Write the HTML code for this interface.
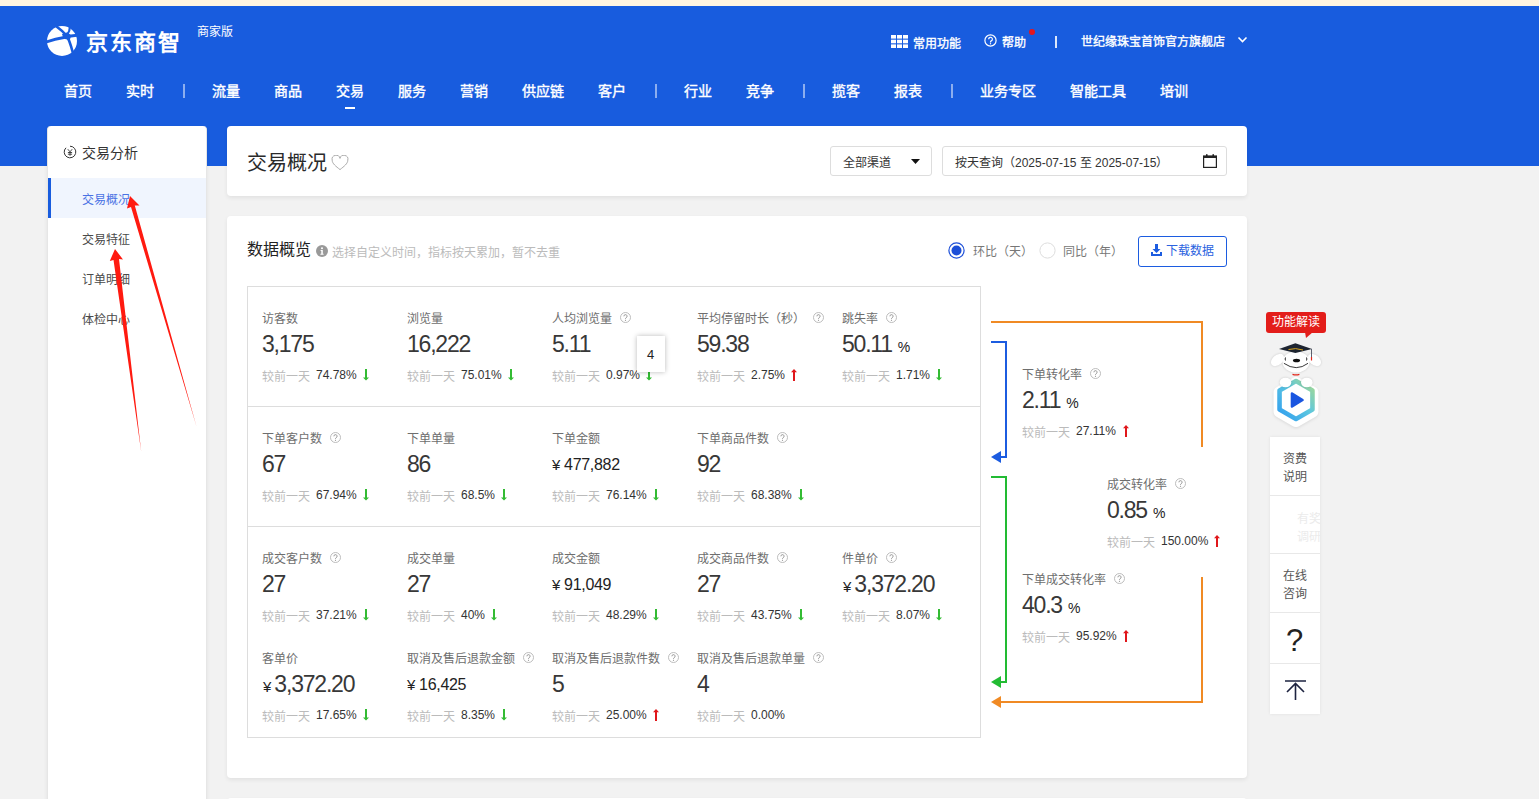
<!DOCTYPE html><html lang="zh-CN"><head><meta charset="utf-8"><style>
*{margin:0;padding:0;box-sizing:border-box}
html,body{width:1539px;height:799px;overflow:hidden}
body{position:relative;background:#f2f2f2;font-family:"Liberation Sans",sans-serif;color:#333}
.a{position:absolute;white-space:nowrap;line-height:1}
.nav{font-size:14px;color:#fff;font-weight:normal;-webkit-text-stroke:0.4px #fff;top:84px}
.sep{width:1.5px;height:14px;background:rgba(255,255,255,.5);top:84px}
.card{background:#fff;border-radius:4px;box-shadow:0 2px 4px rgba(0,0,0,.07)}
.side{font-size:12px;color:#4a4a4a}
.lbl{font-size:12px;color:#6e6e6e}
.val{font-size:23px;color:#383838;letter-spacing:-1.2px}
.sval{font-size:16px;color:#222;letter-spacing:-0.3px}
.yen{font-size:15px;color:#222}
.pu{font-size:14px;color:#222}
.cmp{font-size:12px;color:#bbb}
.pct{font-size:12px;color:#333}
</style></head><body>
<div class="a" style="left:0;top:0;width:1539px;height:6px;background:#fff5e1"></div>
<div class="a" style="left:0;top:6px;width:1539px;height:160px;background:#185cde"></div>

<!-- logo -->
<svg class="a" style="left:47px;top:26px" width="30" height="30" viewBox="0 0 30 30">
  <circle cx="15" cy="15" r="15" fill="#fff"/>
  <g fill="none" stroke="#185cde" stroke-linecap="round">
   <path d="M9.5 0.5Q15 4.5 19.5 9.5Q22.5 14 25.5 25.5" stroke-width="2.6"/>
   <path d="M-0.5 16Q8 12.8 17 11.5Q25 9.5 30.5 9.2" stroke-width="2.8"/>
   <path d="M22.8 1.5Q22.8 5 20.5 8" stroke-width="2.2"/>
  </g>
  <path d="M15 8L19.5 6.5L23.5 8.5L23.5 11.5L22.5 15.5Q20 12.5 16.5 12.8Z" fill="#185cde"/>
</svg>
<div class="a" style="left:86px;top:32px;font-size:22px;color:#fff;font-weight:bold;letter-spacing:2px">京东商智</div>
<div class="a" style="left:197px;top:26px;font-size:12px;color:#fff;font-weight:500">商家版</div>

<!-- nav -->
<div class="a nav" style="left:64px">首页</div>
<div class="a nav" style="left:126px">实时</div>
<div class="a sep" style="left:183px"></div>
<div class="a nav" style="left:212px">流量</div>
<div class="a nav" style="left:274px">商品</div>
<div class="a nav" style="left:336px">交易</div>
<div class="a" style="left:345px;top:107px;width:10px;height:2px;background:#fff"></div>
<div class="a nav" style="left:398px">服务</div>
<div class="a nav" style="left:460px">营销</div>
<div class="a nav" style="left:522px">供应链</div>
<div class="a nav" style="left:598px">客户</div>
<div class="a sep" style="left:655px"></div>
<div class="a nav" style="left:684px">行业</div>
<div class="a nav" style="left:746px">竞争</div>
<div class="a sep" style="left:803px"></div>
<div class="a nav" style="left:832px">揽客</div>
<div class="a nav" style="left:894px">报表</div>
<div class="a sep" style="left:951px"></div>
<div class="a nav" style="left:980px">业务专区</div>
<div class="a nav" style="left:1070px">智能工具</div>
<div class="a nav" style="left:1160px">培训</div>

<!-- top right -->
<svg class="a" style="left:891px;top:35px" width="17" height="13" viewBox="0 0 17 13"><g fill="#fff">
<rect x="0" y="0" width="5" height="3.6"/><rect x="6" y="0" width="5" height="3.6"/><rect x="12" y="0" width="5" height="3.6"/>
<rect x="0" y="4.7" width="5" height="3.6"/><rect x="6" y="4.7" width="5" height="3.6"/><rect x="12" y="4.7" width="5" height="3.6"/>
<rect x="0" y="9.4" width="5" height="3.6"/><rect x="6" y="9.4" width="5" height="3.6"/><rect x="12" y="9.4" width="5" height="3.6"/>
</g></svg>
<div class="a" style="left:913px;top:37.5px;font-size:12px;color:#fff;-webkit-text-stroke:0.35px #fff">常用功能</div>
<svg class="a" style="left:984px;top:34px" width="13" height="13" viewBox="0 0 13 13"><circle cx="6.5" cy="6.5" r="5.6" fill="none" stroke="#fff" stroke-width="1.2"/><path d="M4.6 5.2a1.9 1.9 0 1 1 2.7 1.7c-.6.3-.8.6-.8 1.2v.4" fill="none" stroke="#fff" stroke-width="1.2"/><circle cx="6.5" cy="9.7" r=".7" fill="#fff"/></svg>
<div class="a" style="left:1002px;top:36.5px;font-size:12px;color:#fff;-webkit-text-stroke:0.35px #fff">帮助</div>
<div class="a" style="left:1029px;top:29px;width:6px;height:6px;border-radius:50%;background:#e4161e"></div>
<div class="a" style="left:1055px;top:36px;width:1.5px;height:12px;background:rgba(255,255,255,.85)"></div>
<div class="a" style="left:1081px;top:36px;font-size:12px;color:#fff;-webkit-text-stroke:0.35px #fff">世纪缘珠宝首饰官方旗舰店</div>
<svg class="a" style="left:1237px;top:36px" width="11" height="8" viewBox="0 0 11 8"><path d="M1.5 1.5L5.5 5.5L9.5 1.5" fill="none" stroke="#fff" stroke-width="1.6"/></svg>

<!-- sidebar -->
<div class="a card" style="left:47px;top:126px;width:160px;height:700px;border-radius:4px 4px 0 0;border:1px solid #e6e6e6;border-top:0"></div>
<svg class="a" style="left:63px;top:145px" width="14" height="14" viewBox="0 0 14 14"><path d="M7 1.2A5.8 5.8 0 1 1 3 2.8" fill="none" stroke="#333" stroke-width="1"/><path d="M4.8 4.2L7 6.8L9.2 4.2M7 6.8V10.8M4.9 7.5H9.1M4.9 9.2H9.1" fill="none" stroke="#333" stroke-width=".9"/></svg>
<div class="a" style="left:82px;top:146px;font-size:14px;color:#333">交易分析</div>
<div class="a" style="left:48px;top:178px;width:158px;height:40px;background:#f0f5fe"></div>
<div class="a" style="left:48px;top:178px;width:3px;height:40px;background:#185cde"></div>
<div class="a side" style="left:82px;top:194px;color:#4a72e4">交易概况</div>
<div class="a side" style="left:82px;top:234px">交易特征</div>
<div class="a side" style="left:82px;top:274px">订单明细</div>
<div class="a side" style="left:82px;top:314px">体检中心</div>

<!-- title card -->
<div class="a card" style="left:227px;top:126px;width:1020px;height:70px"></div>
<div class="a" style="left:247px;top:153px;font-size:20px;color:#2a2a2a">交易概况</div>
<svg class="a" style="left:331px;top:155px" width="18" height="16" viewBox="0 0 18 16"><path d="M9 14.6C5 11.4 1.2 8.6 1.2 5.2A3.8 3.8 0 0 1 9 3.4A3.8 3.8 0 0 1 16.8 5.2C16.8 8.6 13 11.4 9 14.6Z" fill="none" stroke="#aaa" stroke-width="1"/></svg>
<div class="a" style="left:830px;top:146px;width:102px;height:30px;border:1px solid #ddd;border-radius:3px;background:#fff"></div>
<div class="a" style="left:843px;top:157px;font-size:12px;color:#333">全部渠道</div>
<svg class="a" style="left:911px;top:159px" width="9" height="5" viewBox="0 0 9 5"><path d="M0 0H9L4.5 5Z" fill="#111"/></svg>
<div class="a" style="left:942px;top:146px;width:285px;height:30px;border:1px solid #ddd;border-radius:3px;background:#fff"></div>
<div class="a" style="left:955px;top:157px;font-size:12px;color:#333">按天查询（2025-07-15 至 2025-07-15）</div>
<svg class="a" style="left:1203px;top:153px" width="14" height="15" viewBox="0 0 14 15"><rect x="0.6" y="3" width="12.8" height="11.4" fill="none" stroke="#222" stroke-width="1.2"/><rect x="0.6" y="3" width="12.8" height="2" fill="#222"/><rect x="3" y="1" width="1.6" height="3.2" rx=".8" fill="#222"/><rect x="9.4" y="1" width="1.6" height="3.2" rx=".8" fill="#222"/></svg>

<!-- data card -->
<div class="a card" style="left:227px;top:216px;width:1020px;height:562px"></div>
<div class="a" style="left:247px;top:242px;font-size:16px;color:#222">数据概览</div>
<svg class="a" style="left:316px;top:245px" width="12" height="12" viewBox="0 0 12 12"><circle cx="6" cy="6" r="6" fill="#999"/><circle cx="6" cy="3.2" r="1" fill="#fff"/><path d="M4.6 5H6.8V8.8H7.6V9.8H4.4V8.8H5.3V6H4.6Z" fill="#fff"/></svg>
<div class="a" style="left:332px;top:247px;font-size:12px;color:#bbb">选择自定义时间，指标按天累加，暂不去重</div>

<div class="a" style="left:247px;top:286px;width:734px;height:452px;border:1px solid #ddd"></div>
<div class="a" style="left:248px;top:406px;width:732px;height:1px;background:#ddd"></div>
<div class="a" style="left:248px;top:526px;width:732px;height:1px;background:#ddd"></div>

<!-- next card -->
<div class="a card" style="left:227px;top:798px;width:1020px;height:100px"></div>

<div class="a lbl" style="left:262px;top:313px">访客数</div>
<div class="a val" style="left:262px;top:333px">3,175</div>
<div class="a cmp" style="left:262px;top:371px">较前一天</div>
<div class="a pct" style="left:316px;top:369px">74.78%</div>
<svg class="a" style="left:363px;top:369px" width="6" height="12" viewBox="0 0 6 12"><path d="M2 0H4V8.5H6L3 11.6L0 8.5H2Z" fill="#33bb33"/></svg>
<div class="a lbl" style="left:407px;top:313px">浏览量</div>
<div class="a val" style="left:407px;top:333px">16,222</div>
<div class="a cmp" style="left:407px;top:371px">较前一天</div>
<div class="a pct" style="left:461px;top:369px">75.01%</div>
<svg class="a" style="left:508px;top:369px" width="6" height="12" viewBox="0 0 6 12"><path d="M2 0H4V8.5H6L3 11.6L0 8.5H2Z" fill="#33bb33"/></svg>
<div class="a lbl" style="left:552px;top:313px">人均浏览量</div>
<svg class="a" style="left:620px;top:312px" width="11" height="11" viewBox="0 0 11 11"><circle cx="5.5" cy="5.5" r="5" fill="none" stroke="#b5b5b5" stroke-width="0.9"/><path d="M3.9 4.3a1.6 1.6 0 1 1 2.3 1.4c-.5.3-.7.5-.7 1v.4" fill="none" stroke="#999" stroke-width="1"/><circle cx="5.5" cy="8.3" r="0.6" fill="#999"/></svg>
<div class="a val" style="left:552px;top:333px">5.11</div>
<div class="a cmp" style="left:552px;top:371px">较前一天</div>
<div class="a pct" style="left:606px;top:369px">0.97%</div>
<svg class="a" style="left:646px;top:369px" width="6" height="12" viewBox="0 0 6 12"><path d="M2 0H4V8.5H6L3 11.6L0 8.5H2Z" fill="#33bb33"/></svg>
<div class="a lbl" style="left:697px;top:313px">平均停留时长（秒）</div>
<svg class="a" style="left:813px;top:312px" width="11" height="11" viewBox="0 0 11 11"><circle cx="5.5" cy="5.5" r="5" fill="none" stroke="#b5b5b5" stroke-width="0.9"/><path d="M3.9 4.3a1.6 1.6 0 1 1 2.3 1.4c-.5.3-.7.5-.7 1v.4" fill="none" stroke="#999" stroke-width="1"/><circle cx="5.5" cy="8.3" r="0.6" fill="#999"/></svg>
<div class="a val" style="left:697px;top:333px">59.38</div>
<div class="a cmp" style="left:697px;top:371px">较前一天</div>
<div class="a pct" style="left:751px;top:369px">2.75%</div>
<svg class="a" style="left:791px;top:369px" width="6" height="12" viewBox="0 0 6 12"><path d="M3 0L0 3.2H2V12H4V3.2H6Z" fill="#e0171b"/></svg>
<div class="a lbl" style="left:842px;top:313px">跳失率</div>
<svg class="a" style="left:886px;top:312px" width="11" height="11" viewBox="0 0 11 11"><circle cx="5.5" cy="5.5" r="5" fill="none" stroke="#b5b5b5" stroke-width="0.9"/><path d="M3.9 4.3a1.6 1.6 0 1 1 2.3 1.4c-.5.3-.7.5-.7 1v.4" fill="none" stroke="#999" stroke-width="1"/><circle cx="5.5" cy="8.3" r="0.6" fill="#999"/></svg>
<div class="a val" style="left:842px;top:333px">50.11<span class="pu" style="margin-left:6px;letter-spacing:0">%</span></div>
<div class="a cmp" style="left:842px;top:371px">较前一天</div>
<div class="a pct" style="left:896px;top:369px">1.71%</div>
<svg class="a" style="left:936px;top:369px" width="6" height="12" viewBox="0 0 6 12"><path d="M2 0H4V8.5H6L3 11.6L0 8.5H2Z" fill="#33bb33"/></svg>
<div class="a lbl" style="left:262px;top:433px">下单客户数</div>
<svg class="a" style="left:330px;top:432px" width="11" height="11" viewBox="0 0 11 11"><circle cx="5.5" cy="5.5" r="5" fill="none" stroke="#b5b5b5" stroke-width="0.9"/><path d="M3.9 4.3a1.6 1.6 0 1 1 2.3 1.4c-.5.3-.7.5-.7 1v.4" fill="none" stroke="#999" stroke-width="1"/><circle cx="5.5" cy="8.3" r="0.6" fill="#999"/></svg>
<div class="a val" style="left:262px;top:453px">67</div>
<div class="a cmp" style="left:262px;top:491px">较前一天</div>
<div class="a pct" style="left:316px;top:489px">67.94%</div>
<svg class="a" style="left:363px;top:489px" width="6" height="12" viewBox="0 0 6 12"><path d="M2 0H4V8.5H6L3 11.6L0 8.5H2Z" fill="#33bb33"/></svg>
<div class="a lbl" style="left:407px;top:433px">下单单量</div>
<div class="a val" style="left:407px;top:453px">86</div>
<div class="a cmp" style="left:407px;top:491px">较前一天</div>
<div class="a pct" style="left:461px;top:489px">68.5%</div>
<svg class="a" style="left:501px;top:489px" width="6" height="12" viewBox="0 0 6 12"><path d="M2 0H4V8.5H6L3 11.6L0 8.5H2Z" fill="#33bb33"/></svg>
<div class="a lbl" style="left:552px;top:433px">下单金额</div>
<div class="a sval" style="left:552px;top:457px"><span class="yen" style="margin-right:4px">¥</span>477,882</div>
<div class="a cmp" style="left:552px;top:491px">较前一天</div>
<div class="a pct" style="left:606px;top:489px">76.14%</div>
<svg class="a" style="left:653px;top:489px" width="6" height="12" viewBox="0 0 6 12"><path d="M2 0H4V8.5H6L3 11.6L0 8.5H2Z" fill="#33bb33"/></svg>
<div class="a lbl" style="left:697px;top:433px">下单商品件数</div>
<svg class="a" style="left:777px;top:432px" width="11" height="11" viewBox="0 0 11 11"><circle cx="5.5" cy="5.5" r="5" fill="none" stroke="#b5b5b5" stroke-width="0.9"/><path d="M3.9 4.3a1.6 1.6 0 1 1 2.3 1.4c-.5.3-.7.5-.7 1v.4" fill="none" stroke="#999" stroke-width="1"/><circle cx="5.5" cy="8.3" r="0.6" fill="#999"/></svg>
<div class="a val" style="left:697px;top:453px">92</div>
<div class="a cmp" style="left:697px;top:491px">较前一天</div>
<div class="a pct" style="left:751px;top:489px">68.38%</div>
<svg class="a" style="left:798px;top:489px" width="6" height="12" viewBox="0 0 6 12"><path d="M2 0H4V8.5H6L3 11.6L0 8.5H2Z" fill="#33bb33"/></svg>
<div class="a lbl" style="left:262px;top:553px">成交客户数</div>
<svg class="a" style="left:330px;top:552px" width="11" height="11" viewBox="0 0 11 11"><circle cx="5.5" cy="5.5" r="5" fill="none" stroke="#b5b5b5" stroke-width="0.9"/><path d="M3.9 4.3a1.6 1.6 0 1 1 2.3 1.4c-.5.3-.7.5-.7 1v.4" fill="none" stroke="#999" stroke-width="1"/><circle cx="5.5" cy="8.3" r="0.6" fill="#999"/></svg>
<div class="a val" style="left:262px;top:573px">27</div>
<div class="a cmp" style="left:262px;top:611px">较前一天</div>
<div class="a pct" style="left:316px;top:609px">37.21%</div>
<svg class="a" style="left:363px;top:609px" width="6" height="12" viewBox="0 0 6 12"><path d="M2 0H4V8.5H6L3 11.6L0 8.5H2Z" fill="#33bb33"/></svg>
<div class="a lbl" style="left:407px;top:553px">成交单量</div>
<div class="a val" style="left:407px;top:573px">27</div>
<div class="a cmp" style="left:407px;top:611px">较前一天</div>
<div class="a pct" style="left:461px;top:609px">40%</div>
<svg class="a" style="left:491px;top:609px" width="6" height="12" viewBox="0 0 6 12"><path d="M2 0H4V8.5H6L3 11.6L0 8.5H2Z" fill="#33bb33"/></svg>
<div class="a lbl" style="left:552px;top:553px">成交金额</div>
<div class="a sval" style="left:552px;top:577px"><span class="yen" style="margin-right:4px">¥</span>91,049</div>
<div class="a cmp" style="left:552px;top:611px">较前一天</div>
<div class="a pct" style="left:606px;top:609px">48.29%</div>
<svg class="a" style="left:653px;top:609px" width="6" height="12" viewBox="0 0 6 12"><path d="M2 0H4V8.5H6L3 11.6L0 8.5H2Z" fill="#33bb33"/></svg>
<div class="a lbl" style="left:697px;top:553px">成交商品件数</div>
<svg class="a" style="left:777px;top:552px" width="11" height="11" viewBox="0 0 11 11"><circle cx="5.5" cy="5.5" r="5" fill="none" stroke="#b5b5b5" stroke-width="0.9"/><path d="M3.9 4.3a1.6 1.6 0 1 1 2.3 1.4c-.5.3-.7.5-.7 1v.4" fill="none" stroke="#999" stroke-width="1"/><circle cx="5.5" cy="8.3" r="0.6" fill="#999"/></svg>
<div class="a val" style="left:697px;top:573px">27</div>
<div class="a cmp" style="left:697px;top:611px">较前一天</div>
<div class="a pct" style="left:751px;top:609px">43.75%</div>
<svg class="a" style="left:798px;top:609px" width="6" height="12" viewBox="0 0 6 12"><path d="M2 0H4V8.5H6L3 11.6L0 8.5H2Z" fill="#33bb33"/></svg>
<div class="a lbl" style="left:842px;top:553px">件单价</div>
<svg class="a" style="left:886px;top:552px" width="11" height="11" viewBox="0 0 11 11"><circle cx="5.5" cy="5.5" r="5" fill="none" stroke="#b5b5b5" stroke-width="0.9"/><path d="M3.9 4.3a1.6 1.6 0 1 1 2.3 1.4c-.5.3-.7.5-.7 1v.4" fill="none" stroke="#999" stroke-width="1"/><circle cx="5.5" cy="8.3" r="0.6" fill="#999"/></svg>
<div class="a val" style="left:843px;top:573px"><span class="yen" style="letter-spacing:0;margin-right:3px">¥</span>3,372.20</div>
<div class="a cmp" style="left:842px;top:611px">较前一天</div>
<div class="a pct" style="left:896px;top:609px">8.07%</div>
<svg class="a" style="left:936px;top:609px" width="6" height="12" viewBox="0 0 6 12"><path d="M2 0H4V8.5H6L3 11.6L0 8.5H2Z" fill="#33bb33"/></svg>
<div class="a lbl" style="left:262px;top:653px">客单价</div>
<div class="a val" style="left:263px;top:673px"><span class="yen" style="letter-spacing:0;margin-right:3px">¥</span>3,372.20</div>
<div class="a cmp" style="left:262px;top:711px">较前一天</div>
<div class="a pct" style="left:316px;top:709px">17.65%</div>
<svg class="a" style="left:363px;top:709px" width="6" height="12" viewBox="0 0 6 12"><path d="M2 0H4V8.5H6L3 11.6L0 8.5H2Z" fill="#33bb33"/></svg>
<div class="a lbl" style="left:407px;top:653px">取消及售后退款金额</div>
<svg class="a" style="left:523px;top:652px" width="11" height="11" viewBox="0 0 11 11"><circle cx="5.5" cy="5.5" r="5" fill="none" stroke="#b5b5b5" stroke-width="0.9"/><path d="M3.9 4.3a1.6 1.6 0 1 1 2.3 1.4c-.5.3-.7.5-.7 1v.4" fill="none" stroke="#999" stroke-width="1"/><circle cx="5.5" cy="8.3" r="0.6" fill="#999"/></svg>
<div class="a sval" style="left:407px;top:677px"><span class="yen" style="margin-right:4px">¥</span>16,425</div>
<div class="a cmp" style="left:407px;top:711px">较前一天</div>
<div class="a pct" style="left:461px;top:709px">8.35%</div>
<svg class="a" style="left:501px;top:709px" width="6" height="12" viewBox="0 0 6 12"><path d="M2 0H4V8.5H6L3 11.6L0 8.5H2Z" fill="#33bb33"/></svg>
<div class="a lbl" style="left:552px;top:653px">取消及售后退款件数</div>
<svg class="a" style="left:668px;top:652px" width="11" height="11" viewBox="0 0 11 11"><circle cx="5.5" cy="5.5" r="5" fill="none" stroke="#b5b5b5" stroke-width="0.9"/><path d="M3.9 4.3a1.6 1.6 0 1 1 2.3 1.4c-.5.3-.7.5-.7 1v.4" fill="none" stroke="#999" stroke-width="1"/><circle cx="5.5" cy="8.3" r="0.6" fill="#999"/></svg>
<div class="a val" style="left:552px;top:673px">5</div>
<div class="a cmp" style="left:552px;top:711px">较前一天</div>
<div class="a pct" style="left:606px;top:709px">25.00%</div>
<svg class="a" style="left:653px;top:709px" width="6" height="12" viewBox="0 0 6 12"><path d="M3 0L0 3.2H2V12H4V3.2H6Z" fill="#e0171b"/></svg>
<div class="a lbl" style="left:697px;top:653px">取消及售后退款单量</div>
<svg class="a" style="left:813px;top:652px" width="11" height="11" viewBox="0 0 11 11"><circle cx="5.5" cy="5.5" r="5" fill="none" stroke="#b5b5b5" stroke-width="0.9"/><path d="M3.9 4.3a1.6 1.6 0 1 1 2.3 1.4c-.5.3-.7.5-.7 1v.4" fill="none" stroke="#999" stroke-width="1"/><circle cx="5.5" cy="8.3" r="0.6" fill="#999"/></svg>
<div class="a val" style="left:697px;top:673px">4</div>
<div class="a cmp" style="left:697px;top:711px">较前一天</div>
<div class="a pct" style="left:751px;top:709px">0.00%</div>
<div class="a lbl" style="left:1022px;top:369px">下单转化率</div>
<svg class="a" style="left:1090px;top:368px" width="11" height="11" viewBox="0 0 11 11"><circle cx="5.5" cy="5.5" r="5" fill="none" stroke="#b5b5b5" stroke-width="0.9"/><path d="M3.9 4.3a1.6 1.6 0 1 1 2.3 1.4c-.5.3-.7.5-.7 1v.4" fill="none" stroke="#999" stroke-width="1"/><circle cx="5.5" cy="8.3" r="0.6" fill="#999"/></svg>
<div class="a val" style="left:1022px;top:389px">2.11<span class="pu" style="margin-left:6px;letter-spacing:0">%</span></div>
<div class="a cmp" style="left:1022px;top:427px">较前一天</div>
<div class="a pct" style="left:1076px;top:425px">27.11%</div>
<svg class="a" style="left:1123px;top:425px" width="6" height="12" viewBox="0 0 6 12"><path d="M3 0L0 3.2H2V12H4V3.2H6Z" fill="#e0171b"/></svg>
<div class="a lbl" style="left:1107px;top:479px">成交转化率</div>
<svg class="a" style="left:1175px;top:478px" width="11" height="11" viewBox="0 0 11 11"><circle cx="5.5" cy="5.5" r="5" fill="none" stroke="#b5b5b5" stroke-width="0.9"/><path d="M3.9 4.3a1.6 1.6 0 1 1 2.3 1.4c-.5.3-.7.5-.7 1v.4" fill="none" stroke="#999" stroke-width="1"/><circle cx="5.5" cy="8.3" r="0.6" fill="#999"/></svg>
<div class="a val" style="left:1107px;top:499px">0.85<span class="pu" style="margin-left:6px;letter-spacing:0">%</span></div>
<div class="a cmp" style="left:1107px;top:537px">较前一天</div>
<div class="a pct" style="left:1161px;top:535px">150.00%</div>
<svg class="a" style="left:1214px;top:535px" width="6" height="12" viewBox="0 0 6 12"><path d="M3 0L0 3.2H2V12H4V3.2H6Z" fill="#e0171b"/></svg>
<div class="a lbl" style="left:1022px;top:574px">下单成交转化率</div>
<svg class="a" style="left:1114px;top:573px" width="11" height="11" viewBox="0 0 11 11"><circle cx="5.5" cy="5.5" r="5" fill="none" stroke="#b5b5b5" stroke-width="0.9"/><path d="M3.9 4.3a1.6 1.6 0 1 1 2.3 1.4c-.5.3-.7.5-.7 1v.4" fill="none" stroke="#999" stroke-width="1"/><circle cx="5.5" cy="8.3" r="0.6" fill="#999"/></svg>
<div class="a val" style="left:1022px;top:594px">40.3<span class="pu" style="margin-left:6px;letter-spacing:0">%</span></div>
<div class="a cmp" style="left:1022px;top:632px">较前一天</div>
<div class="a pct" style="left:1076px;top:630px">95.92%</div>
<svg class="a" style="left:1123px;top:630px" width="6" height="12" viewBox="0 0 6 12"><path d="M3 0L0 3.2H2V12H4V3.2H6Z" fill="#e0171b"/></svg>
<!-- flow lines -->
<svg class="a" style="left:985px;top:315px" width="225" height="400" viewBox="985 315 225 400">
 <g fill="none" stroke-width="2">
  <path d="M991 322H1202V447" stroke="#f08a24"/>
  <path d="M1202 577V702H1000" stroke="#f08a24"/>
  <path d="M991 342H1006V457H1000" stroke="#1c5ce0"/>
  <path d="M991 477H1006V682H1000" stroke="#22bb33"/>
 </g>
 <path d="M991 457L1001 451V463Z" fill="#1c5ce0"/>
 <path d="M991 682L1001 676V688Z" fill="#22bb33"/>
 <path d="M991 702L1001 696V708Z" fill="#f08a24"/>
</svg>
<!-- radios & download -->
<svg class="a" style="left:948px;top:242px" width="17" height="17" viewBox="0 0 17 17"><circle cx="8.5" cy="8.5" r="7.6" fill="#fff" stroke="#1c4fd8" stroke-width="1.2"/><circle cx="8.5" cy="8.5" r="5" fill="#1c4fd8"/></svg>
<div class="a" style="left:973px;top:246px;font-size:12px;color:#777">环比（天）</div>
<svg class="a" style="left:1039px;top:242px" width="17" height="17" viewBox="0 0 17 17"><circle cx="8.5" cy="8.5" r="7.6" fill="#fff" stroke="#ddd" stroke-width="1"/></svg>
<div class="a" style="left:1063px;top:246px;font-size:12px;color:#777">同比（年）</div>
<div class="a" style="left:1138px;top:236px;width:89px;height:31px;border:1px solid #1c5ce0;border-radius:3px;background:#fff"></div>
<svg class="a" style="left:1151px;top:244px" width="11" height="12" viewBox="0 0 11 12"><path d="M4 0H7V5H9.5L5.5 9L1.5 5H4Z" fill="#1c5ce0"/><path d="M0 8H2V10H9V8H11V12H0Z" fill="#1c5ce0"/></svg>
<div class="a" style="left:1166px;top:245px;font-size:12px;color:#2a62e0">下载数据</div>

<!-- tooltip 4 -->
<div class="a" style="left:637px;top:336px;width:28px;height:36px;background:#fff;box-shadow:0 0 5px rgba(0,0,0,.28)"></div>
<div class="a" style="left:647px;top:348px;font-size:13px;color:#222">4</div>

<!-- right float panel -->
<div class="a" style="left:1266px;top:312px;width:60px;height:21px;background:#e31d1a;border-radius:3px"></div>
<svg class="a" style="left:1305px;top:332px" width="8" height="6" viewBox="0 0 8 6"><path d="M0 0H8L1 6Z" fill="#e31d1a"/></svg>
<div class="a" style="left:1272px;top:316px;font-size:12px;color:#fff">功能解读</div>
<svg class="a" style="left:1268px;top:340px" width="56" height="90" viewBox="0 0 56 90">
 <defs><linearGradient id="hg" x1="1" y1="0" x2="0" y2="1"><stop offset="0" stop-color="#a6d98f"/><stop offset=".45" stop-color="#5cc7e0"/><stop offset="1" stop-color="#2f9cf0"/></linearGradient>
 <filter id="sh" x="-20%" y="-20%" width="140%" height="140%"><feGaussianBlur stdDeviation="0.8"/></filter></defs>
 <path d="M28 43L44.45 52.5V71.5L28 81L11.55 71.5V52.5Z" fill="#fff" stroke="#fff" stroke-width="12" stroke-linejoin="round" style="filter:drop-shadow(0 1px 1.5px rgba(0,0,0,.10))"/>
 <path d="M28 41L44.45 50.5V69.5L28 79L11.55 69.5V50.5Z" fill="#fff" stroke="url(#hg)" stroke-width="4.6" stroke-linejoin="round"/>
 <path d="M24 53.5L34.5 60L24 66.5Z" fill="#1a56e0" stroke="#1a56e0" stroke-width="2.6" stroke-linejoin="round"/>
 <g style="filter:drop-shadow(0 0.5px 1px rgba(0,0,0,.18))">
 <ellipse cx="9.5" cy="20" rx="5" ry="7.5" fill="#fff" transform="rotate(50 9.5 20)"/>
 <ellipse cx="46.5" cy="20" rx="5" ry="7.5" fill="#fff" transform="rotate(-50 46.5 20)"/>
 <ellipse cx="28" cy="22" rx="13.5" ry="10.5" fill="#fff"/>
 </g>
 <path d="M11 8.9L27.4 3.2L44 8.9L27.4 13Z" fill="#1d2430"/>
 <path d="M20.5 9.5Q27.5 7.5 35 10" fill="none" stroke="#d9a520" stroke-width="1"/>
 <path d="M43.5 8.9V20" stroke="#4a5060" stroke-width="0.9"/>
 <path d="M43.5 17V20.5" stroke="#e3261a" stroke-width="1.2"/>
 <ellipse cx="28.5" cy="20.5" rx="3.6" ry="1.8" fill="#111"/>
 <path d="M17.5 17.5Q16.8 19 17.5 20.5M38.5 17.5Q39.2 19 38.5 20.5" fill="none" stroke="#111" stroke-width="0.9"/>
 <path d="M15.9 23.3Q28.5 32 40 23.3" fill="none" stroke="#222" stroke-width="0.9"/>
 <path d="M24.5 34.3Q28 35.5 31.4 34.3" fill="none" stroke="#e3261a" stroke-width="1.3"/>
 <g style="filter:drop-shadow(0 0.5px 1px rgba(0,0,0,.18))">
 <ellipse cx="17.5" cy="42.5" rx="5.8" ry="4.8" fill="#fff"/>
 <ellipse cx="38.8" cy="42.5" rx="5.8" ry="4.8" fill="#fff"/>
 </g>
</svg>

<div class="a" style="left:1270px;top:437px;width:50px;height:277px;background:#fff;box-shadow:0 0 3px rgba(0,0,0,.08)"></div>
<div class="a" style="left:1270px;top:495px;width:50px;height:1px;background:#e8e8e8"></div>
<div class="a" style="left:1270px;top:553px;width:50px;height:1px;background:#e8e8e8"></div>
<div class="a" style="left:1270px;top:612px;width:50px;height:1px;background:#e8e8e8"></div>
<div class="a" style="left:1270px;top:663px;width:50px;height:1px;background:#e8e8e8"></div>
<div class="a" style="left:1283px;top:450px;font-size:12px;color:#555;line-height:18px;white-space:normal;width:26px">资费说明</div>
<div class="a" style="left:1297px;top:510px;font-size:12px;color:#ebebeb;line-height:18px;white-space:normal;width:26px;overflow:hidden">有奖调研</div>
<div class="a" style="left:1283px;top:568px;font-size:12px;color:#555;line-height:17.5px;white-space:normal;width:26px">在线咨询</div>
<div class="a" style="left:1286px;top:625px;font-size:31px;color:#222">?</div>
<svg class="a" style="left:1284px;top:679px" width="23" height="22" viewBox="0 0 23 22"><path d="M1 2H22M11.5 4V21M3 13L11.5 4.5L20 13" fill="none" stroke="#1d2340" stroke-width="1.6"/></svg>

<!-- red annotation arrows -->
<svg class="a" style="left:0;top:0" width="260" height="480" viewBox="0 0 260 480">
 <path d="M130 196L139.5 205.5L134.8 205.5L196.5 426.5L131 207L127 208.5Z" fill="#ff1a10"/>
 <path d="M115 249L123 259.5L119 259L141.2 451.5L113.5 260L109.8 261Z" fill="#ff1a10"/>
</svg>

</body></html>
